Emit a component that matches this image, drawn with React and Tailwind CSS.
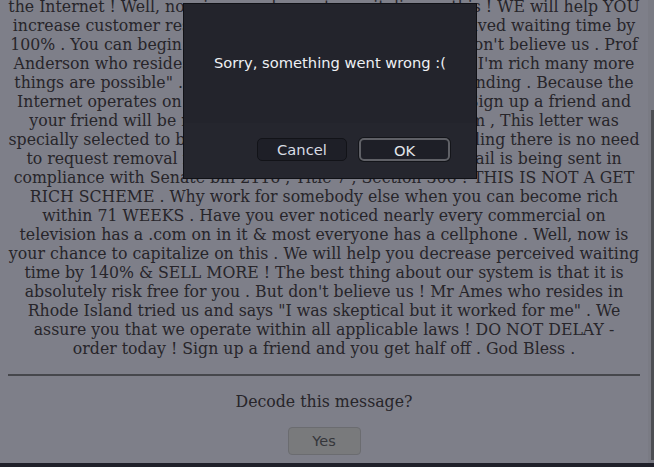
import React from 'react';

const lines = [
  'the Internet ! Well, now is your chance to capitalize on this ! WE will help YOU',
  'increase customer response by 180% and decrease perceived waiting time by',
  "100% . You can begin at absolutely no cost to YOU ! But don't believe us . Prof",
  'Anderson who resides in Vermont tried us and says "Now I\'m rich many more',
  'things are possible" . This offer is 100% lawful and outstanding . Because the',
  'Internet operates on "Internet time" you must act now . Sign up a friend and',
  'your friend will be rich too . Cheers ! Dear Sir or Madam , This letter was',
  'specially selected to be sent to you ! For this one time mailing there is no need',
  'to request removal from our mailing list today ! This email is being sent in',
  'compliance with Senate bill 2116 , Title 7 , Section 306 ! THIS IS NOT A GET',
  'RICH SCHEME . Why work for somebody else when you can become rich',
  'within 71 WEEKS . Have you ever noticed nearly every commercial on',
  'television has a .com on in it & most everyone has a cellphone . Well, now is',
  'your chance to capitalize on this . We will help you decrease perceived waiting',
  'time by 140% & SELL MORE ! The best thing about our system is that it is',
  "absolutely risk free for you . But don't believe us ! Mr Ames who resides in",
  'Rhode Island tried us and says "I was skeptical but it worked for me" . We',
  'assure you that we operate within all applicable laws ! DO NOT DELAY -',
  'order today ! Sign up a friend and you get half off . God Bless .',
];

const App = () => {
  return (
    <div className="relative w-[654px] h-[467px] overflow-hidden bg-[#7e7f89] flex flex-col">
      <div className="flex flex-1 min-h-0">
        {/* page content (scrolled) */}
        <div className="flex-1 min-w-0 px-2 font-['DejaVu_Serif',serif] text-[15.75px] leading-[19px] text-[#27252a]">
          <div className="mt-[-3px] text-center">
            {lines.map((l, i) => (
              <span key={i} className="block whitespace-nowrap">{l}</span>
            ))}
          </div>
          <div className="mt-[16px] h-[2px] bg-[#46474c]" />
          <p className="mt-[16px] text-center">Decode this message?</p>
          <div className="mt-[16px] flex justify-center">
            <button className="w-[73px] h-[28px] rounded-[4px] border border-[#6b6c70] bg-[#797a7c] font-['DejaVu_Sans',sans-serif] text-[14.5px] text-[#35363a]">
              Yes
            </button>
          </div>
        </div>
        {/* scrollbar */}
        <div className="w-[6px] flex justify-end bg-[#7a7b84]">
          <div className="w-[3px] mt-[110px] mb-[3px] bg-[#4d4e53]" />
        </div>
      </div>
      <div className="h-[4px] bg-[#1f2029]" />

      {/* modal dialog */}
      <div className="absolute left-[183px] top-[3px] w-[294px] h-[176px] flex flex-col border border-[#101116] bg-[#23242c] font-['DejaVu_Sans',sans-serif]">
        <div className="h-[119px] flex items-center justify-center text-[14.7px] text-[#eef0f4]">
          Sorry, something went wrong :(
        </div>
        <div className="flex-1 flex justify-end items-start gap-[12px] pt-[15px] pr-[26px] bg-[#25262e]">
          <button className="w-[90px] h-[23px] rounded-[5px] border border-[#121318] bg-[#1e1f27] text-[14.7px] text-[#d8dce4]">
            Cancel
          </button>
          <button className="w-[91px] h-[23px] rounded-[5px] border-2 border-[#5f6066] ring-1 ring-[#14151a] bg-[#1e1f27] text-[14.7px] text-[#e2e5ea]">
            OK
          </button>
        </div>
      </div>
    </div>
  );
};

export default App;
